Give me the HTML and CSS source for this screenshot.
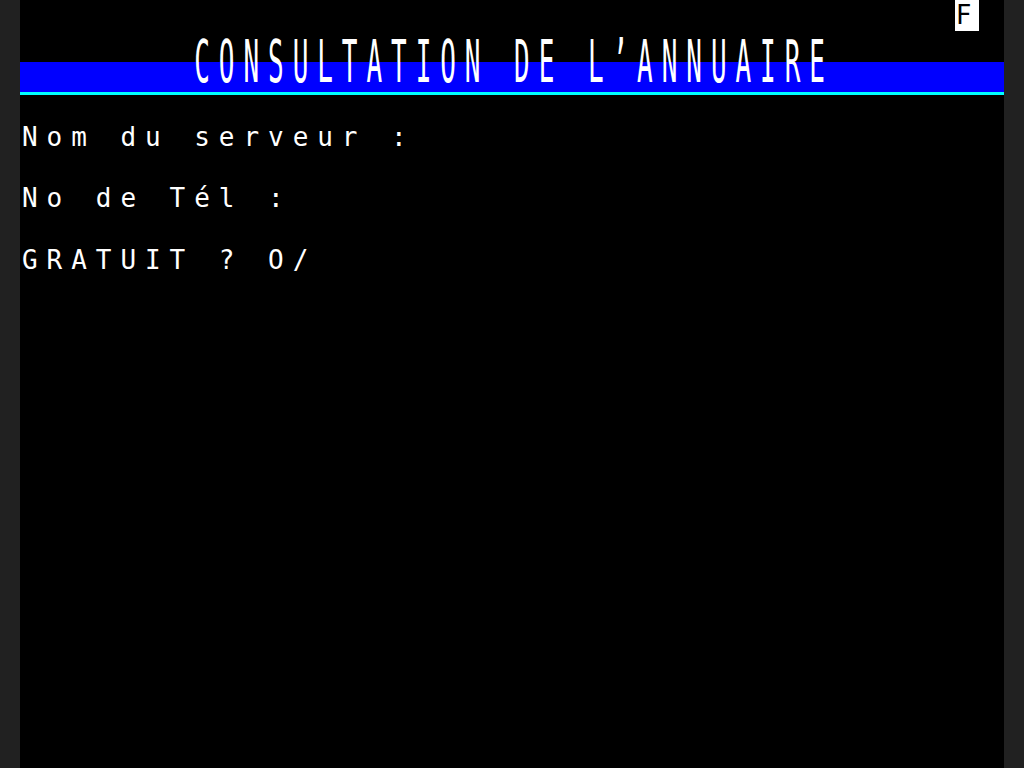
FILE: index.html
```html
<!DOCTYPE html>
<html lang="fr">
<head>
<meta charset="utf-8">
<title>Minitel - Consultation de l'annuaire</title>
<link rel="stylesheet" href="styles.css">
</head>
<body>
<main class="screen">
  <div class="row status"><span class="status-flag">F</span></div>
  <div class="title-band"><h1 class="title">       CONSULTATION DE L’ANNUAIRE</h1></div>
  <div class="row rule"></div>
  <div class="row line">Nom du serveur :</div>
  <div class="row"></div>
  <div class="row line">No de Tél :</div>
  <div class="row"></div>
  <div class="row line">GRATUIT ? O/</div>
</main>
</body>
</html>
```
FILE: styles.css
```css
html, body {
  margin: 0;
  padding: 0;
  background: #212121;
  height: 100%;
}

.screen {
  width: 984px;
  height: 768px;
  margin: 0 auto;
  background: #000;
  color: #fff;
  font-family: "DejaVu Sans Mono", "Liberation Mono", monospace;
  font-size: 26px;
  letter-spacing: 8.95px;
  white-space: pre;
  display: flex;
  flex-direction: column;
  overflow: hidden;
}

.row {
  height: 30.72px;
  line-height: 30.72px;
  flex: none;
  box-sizing: border-box;
}

.line {
  padding-left: 2px;
  margin-top: -1px;
  margin-bottom: 1px;
}

.status {
  display: flex;
  justify-content: flex-end;
  padding-right: 24.6px;
}

.status-flag {
  width: 24.6px;
  height: 30.72px;
  box-sizing: border-box;
  padding-left: 1px;
  background: #fff;
  color: #000;
  letter-spacing: 0;
  font-size: 26px;
  line-height: 30.72px;
}

.title-band {
  height: 61.44px;
  flex: none;
  background: linear-gradient(to bottom, #000 0, #000 50%, #0000ff 50%, #0000ff 100%);
}

.title {
  margin: 0;
  font-size: 26px;
  font-weight: normal;
  line-height: 30.72px;
  padding-left: 2px;
  transform-origin: 0 0;
  transform: translateY(-3px) scaleY(2.27);
}

.rule {
  border-top: 3px solid #00ffff;
}
```
